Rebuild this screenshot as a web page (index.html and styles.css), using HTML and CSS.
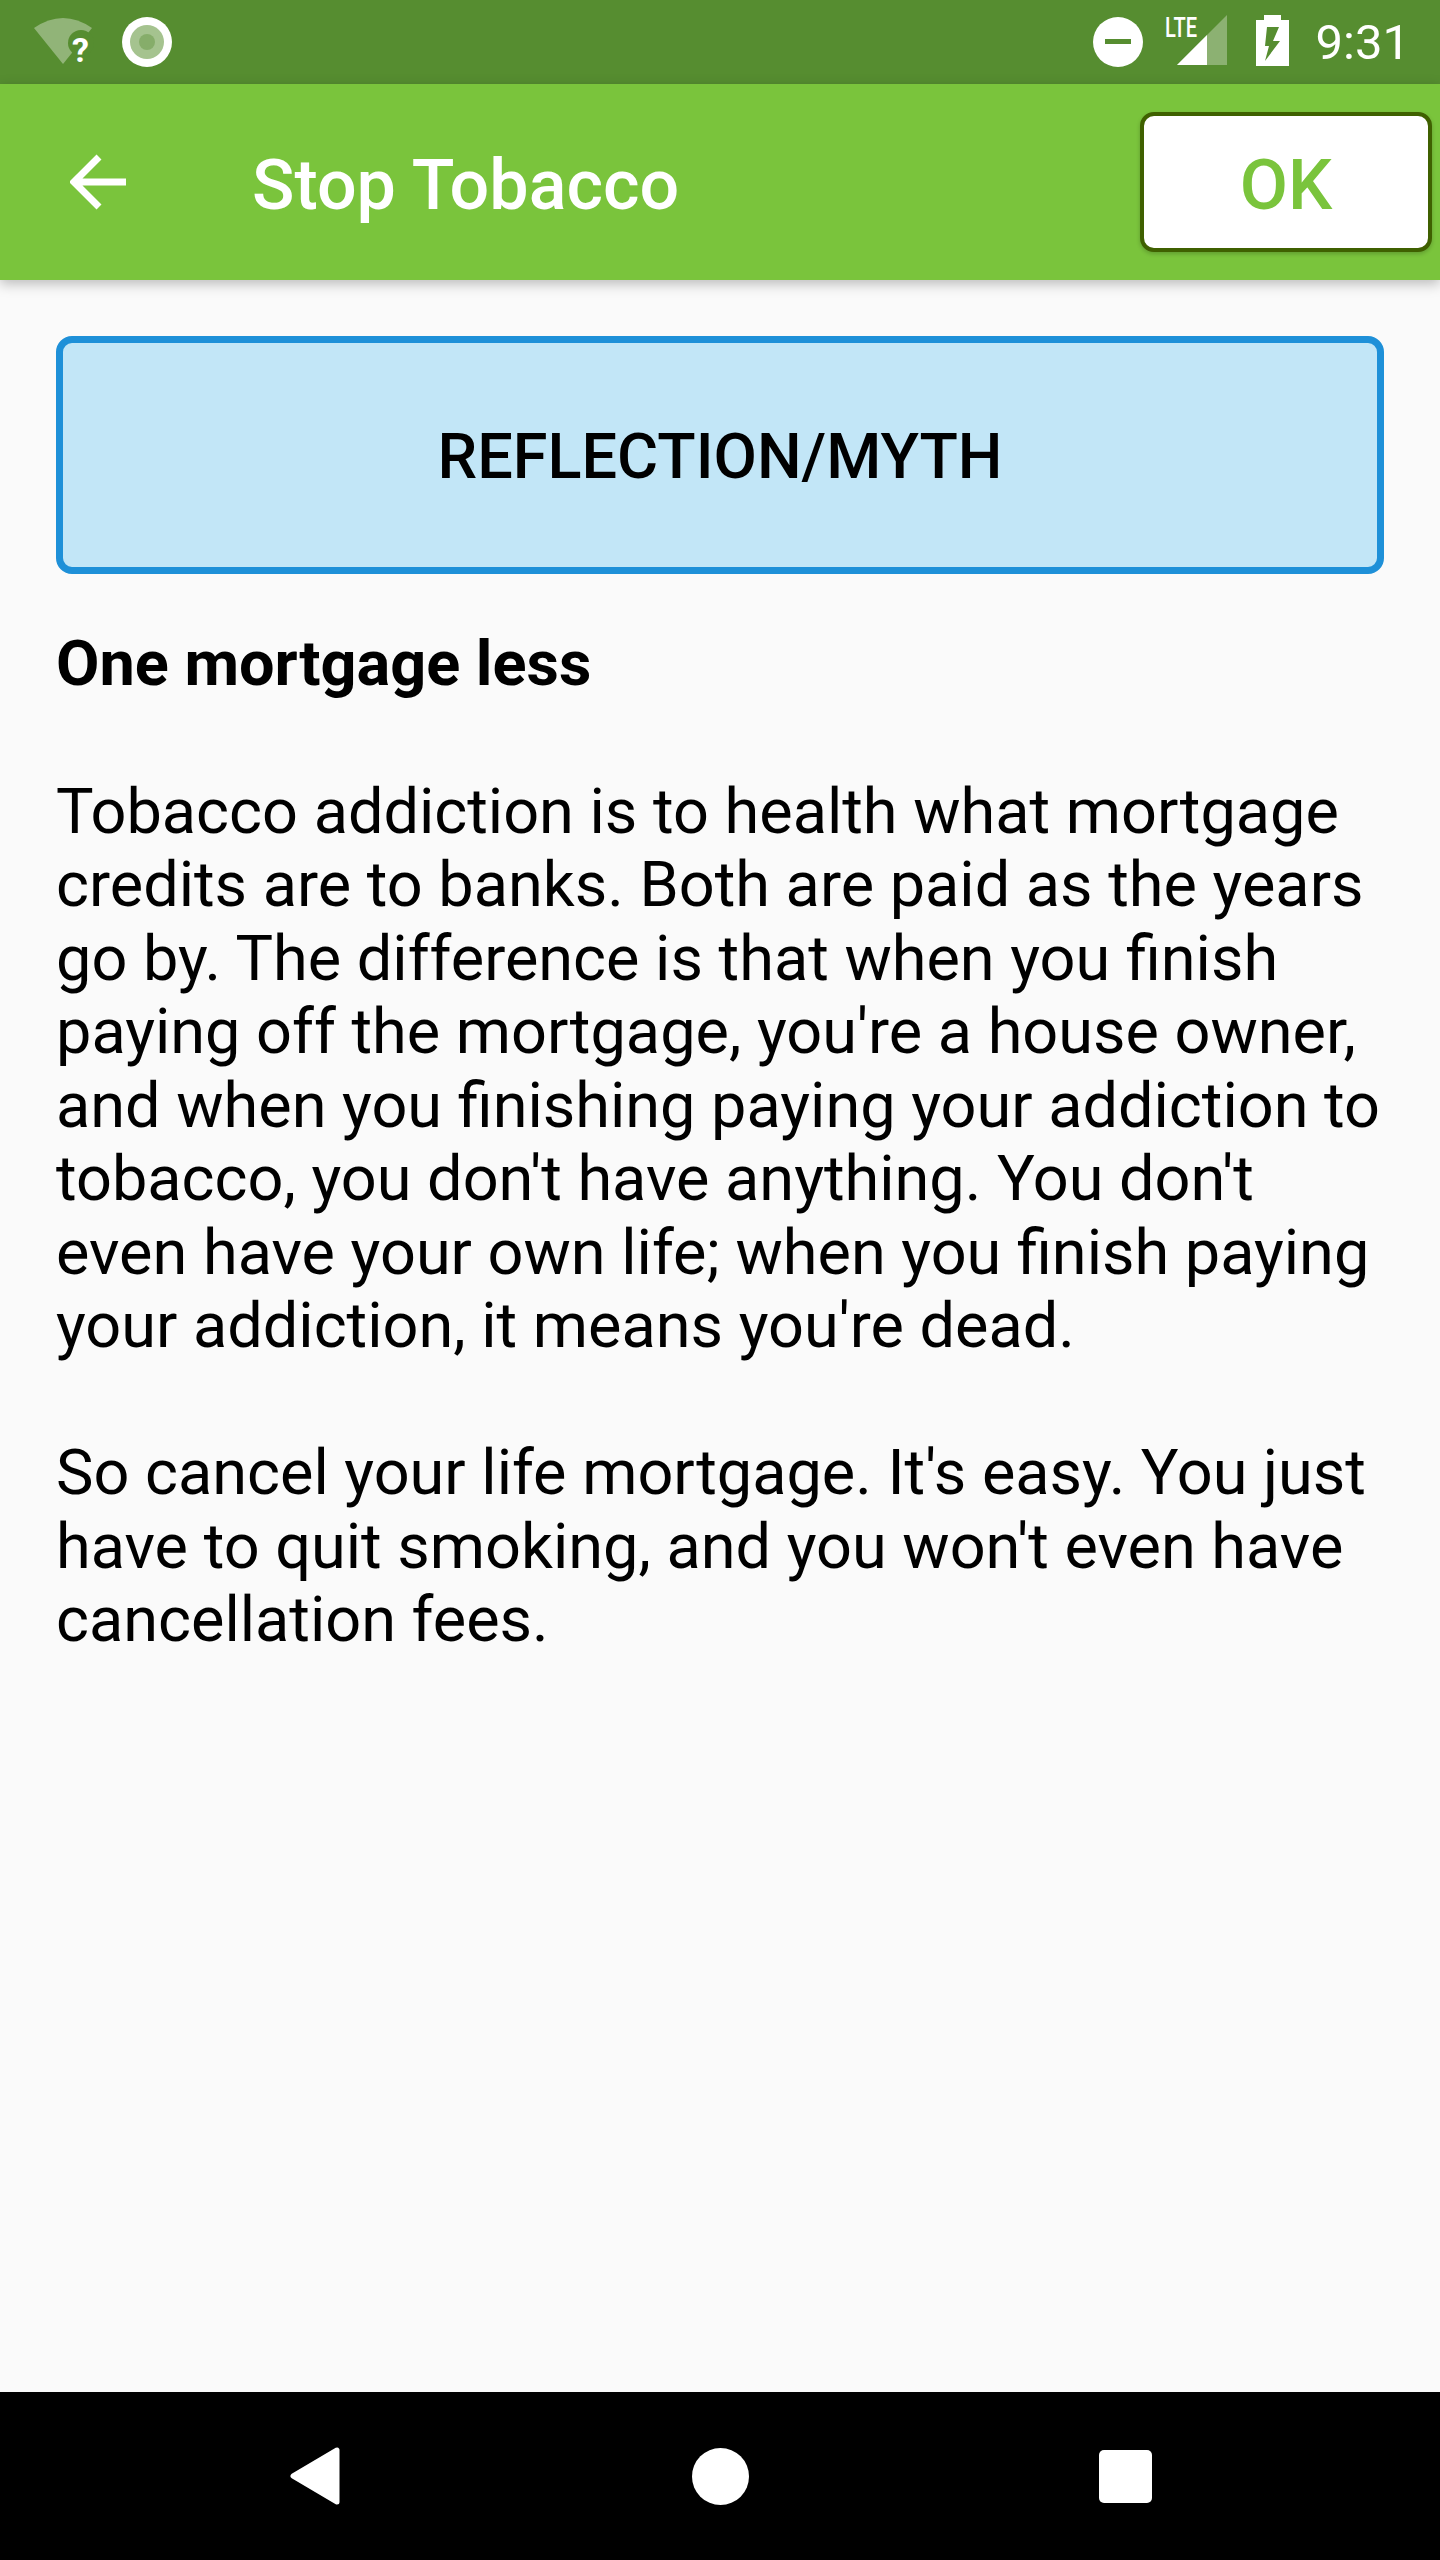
FILE: index.html
```html
<!DOCTYPE html>
<html lang="en">
<head>
  <meta charset="UTF-8">
  <meta name="viewport" content="width=device-width, initial-scale=1.0">
  <title>Stop Tobacco</title>
  <link rel="stylesheet" href="styles.css">
</head>
<body>
  <div class="screen">
    <!-- Android status bar -->
    <div class="status-bar">
      <div class="status-left">
        <svg class="wifi-icon" width="60" height="50" viewBox="0 0 60 50">
          <path d="M0 11 Q29 -9 58 11 L29 47 Z" fill="#fff" fill-opacity="0.35"/>
          <circle cx="47" cy="26" r="13" fill="#568d30"/>
          <text x="38" y="45" class="wifi-mark">?</text>
        </svg>
        <svg class="vpn-icon" width="50" height="50" viewBox="0 0 50 50">
          <circle cx="25" cy="25" r="25" fill="#fff"/>
          <circle cx="25" cy="25" r="17" fill="#a5c38f"/>
          <circle cx="25" cy="25" r="8" fill="#86ad6a"/>
        </svg>
      </div>
      <div class="status-right">
        <svg class="dnd-icon" width="50" height="50" viewBox="0 0 50 50">
          <circle cx="25" cy="25" r="25" fill="#fff"/>
          <rect x="12" y="22" width="26" height="5" fill="#568d30"/>
        </svg>
        <svg class="signal-icon" width="64" height="52" viewBox="0 0 64 52">
          <path d="M12 50 L62 0 L62 50 Z" fill="#fff" fill-opacity="0.32"/>
          <path d="M12 50 L42 20 L42 50 Z" fill="#fff"/>
          <text x="0" y="22" class="lte-mark" textLength="32" lengthAdjust="spacingAndGlyphs">LTE</text>
        </svg>
        <svg class="battery-icon" width="33" height="52" viewBox="0 0 33 52">
          <path d="M8 0 H25 V5 H33 V51 H0 V5 H8 Z" fill="#fff"/>
          <path d="M11 12 H23 L17 26 H24 L9 46 L13 31 H9 Z" fill="#568d30"/>
        </svg>
        <span class="clock">9:31</span>
      </div>
    </div>

    <!-- Toolbar -->
    <header class="app-bar">
      <svg class="back-icon" width="56" height="56" viewBox="0 0 56 56">
        <path d="M56 28 H4 M29 3 L4 28 L29 53" fill="none" stroke="#fff" stroke-width="7"/>
      </svg>
      <h1 class="app-title">Stop Tobacco</h1>
      <button class="ok-btn">OK</button>
    </header>

    <main class="content">
      <div class="section-box">REFLECTION/MYTH</div>
      <h2 class="myth-title">One mortgage less</h2>
      <p class="myth-text">Tobacco addiction is to health what mortgage<br>credits are to banks. Both are paid as the years<br>go by. The difference is that when you finish<br>paying off the mortgage, you're a house owner,<br>and when you finishing paying your addiction to<br>tobacco, you don't have anything. You don't<br>even have your own life; when you finish paying<br>your addiction, it means you're dead.</p>
      <p class="myth-text">So cancel your life mortgage. It's easy. You just<br>have to quit smoking, and you won't even have<br>cancellation fees.</p>
    </main>

    <!-- Android nav bar -->
    <nav class="nav-bar">
      <svg width="52" height="58" viewBox="0 0 52 58">
        <path d="M48 3 V55 L4 29 Z" fill="#fff" stroke="#fff" stroke-width="5" stroke-linejoin="round"/>
      </svg>
      <svg width="57" height="57" viewBox="0 0 57 57">
        <circle cx="28.5" cy="28.5" r="28.5" fill="#fff"/>
      </svg>
      <svg width="53" height="53" viewBox="0 0 53 53">
        <rect width="53" height="53" rx="5" fill="#fff"/>
      </svg>
    </nav>
  </div>
</body>
</html>
```

FILE: styles.css
```css
body {
  margin: 0;
  font-family: Roboto, "Liberation Sans", sans-serif;
  background: #fafafa;
  color: #000;
}
.screen {
  width: 1440px;
  height: 2560px;
  display: flex;
  flex-direction: column;
  overflow: hidden;
}

/* Status bar */
.status-bar {
  height: 84px;
  flex: none;
  background: #568d30;
  display: flex;
  justify-content: space-between;
  align-items: center;
  padding: 0 30px 0 34px;
}
.status-bar svg {
  overflow: visible;
}
.status-left,
.status-right {
  display: flex;
  align-items: center;
}
.status-left {
  gap: 28px;
}
.wifi-mark {
  font-size: 34px;
  font-weight: 700;
  fill: #fff;
}
.dnd-icon {
  margin-right: 22px;
}
.signal-icon {
  margin-right: 27px;
  margin-top: -2px;
}
.lte-mark {
  font-size: 27px;
  font-weight: 500;
  fill: #fff;
}
.battery-icon {
  margin-right: 27px;
  margin-top: -2px;
}
.clock {
  font-size: 49px;
  color: #fff;
}

/* Toolbar */
.app-bar {
  height: 196px;
  flex: none;
  background: #7ac43c;
  display: flex;
  align-items: center;
  padding: 0 8px 0 70px;
  box-shadow: 0 4px 12px rgba(0,0,0,0.25);
  position: relative;
}
.app-title {
  flex: 1;
  margin: 6px 0 0 126px;
  font-size: 70px;
  font-weight: 500;
  color: #fff;
}
.ok-btn {
  width: 292px;
  height: 140px;
  background: #fff;
  border: 4px solid #3f6000;
  border-radius: 14px;
  box-shadow: 0 2px 4px rgba(0,0,0,0.2);
  color: #7ac43c;
  font-family: inherit;
  font-size: 70px;
  font-weight: 500;
  padding: 5px 0 0;
}

/* Content */
.content {
  flex: 1;
  padding: 56px 56px 0;
}
.section-box {
  height: 238px;
  box-sizing: border-box;
  border: 7px solid #1e90d8;
  border-radius: 16px;
  background: #c2e6f7;
  display: flex;
  align-items: center;
  justify-content: center;
  padding-top: 2px;
  font-size: 63px;
  font-weight: 500;
}
.myth-title {
  margin: 53px 0 74px;
  font-size: 63px;
  font-weight: 700;
  line-height: 73.5px;
}
.myth-text {
  margin: 0 0 73.5px;
  font-size: 63px;
  line-height: 73.5px;
}

/* Nav bar */
.nav-bar {
  height: 168px;
  flex: none;
  background: #000;
  display: flex;
  align-items: center;
  justify-content: space-between;
  padding: 0 288px 0 289px;
}
```
